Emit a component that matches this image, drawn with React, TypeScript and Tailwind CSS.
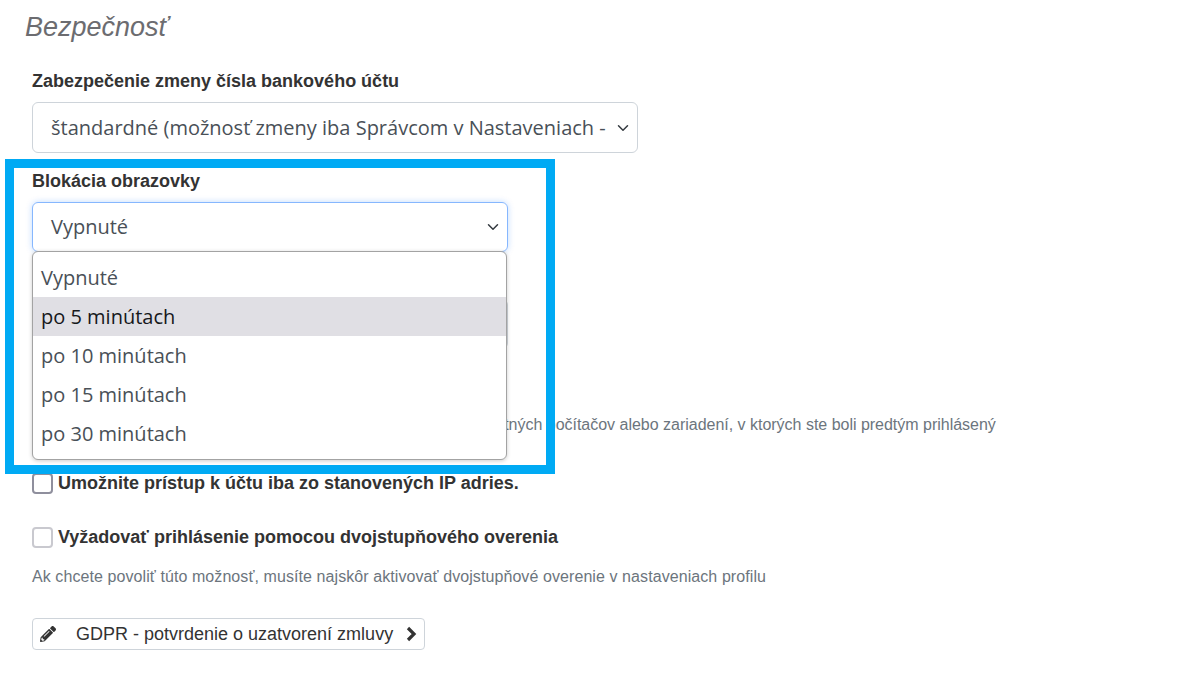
import { FaPencilAlt } from "react-icons/fa";

const OPTIONS = ["Vypnuté", "po 5 minútach", "po 10 minútach", "po 15 minútach", "po 30 minútach"];
const SELECT_FONT = { fontFamily: '"Open Sans", sans-serif' };

function Chevron() {
  return (
    <svg viewBox="0 0 16 16" className="w-4 h-3 shrink-0" fill="none" stroke="#343a40" strokeWidth="2" strokeLinecap="round" strokeLinejoin="round" aria-hidden>
      <path d="m2 5 6 6 6-6" />
    </svg>
  );
}

export default function App() {
  return (
    <div className="relative h-[682px] overflow-hidden bg-white pl-[32px] font-['Liberation_Sans',sans-serif] text-[18px] text-[#333333]">
      <h2 className="-ml-[7px] pt-[11px] text-[27px] leading-[32px] italic text-[#6c6c70]">Bezpečnosť</h2>

      <label className="mt-[26px] block leading-[24px] font-bold">Zabezpečenie zmeny čísla bankového účtu</label>
      <div className="mt-[9px] flex h-[51px] w-[606px] items-center justify-between rounded-[6px] border border-[#ced4da] pl-[18px] pr-[6px] text-[20px] text-[#495057]" style={SELECT_FONT}>
        <span className="whitespace-nowrap">štandardné (možnosť zmeny iba Správcom v Nastaveniach -</span>
        <Chevron />
      </div>

      <label className="mt-[16px] block leading-[24px] font-bold">Blokácia obrazovky</label>
      <div className="relative mt-[9px] w-[476px]">
        <div className="flex h-[50px] items-center justify-between rounded-[6px] border border-[#86b7fe] pl-[18px] pr-[6px] text-[20px] text-[#495057] shadow-[0_0_6px_rgba(13,110,253,0.25)]" style={SELECT_FONT}>
          <span>Vypnuté</span>
          <Chevron />
        </div>
        <ul className="absolute top-[49px] left-0 z-10 h-[209px] w-[475px] overflow-hidden rounded-[6px] border border-[#a3a3a3] bg-white py-[6px] text-[20px] text-[#495057] shadow-[0_1px_4px_rgba(0,0,0,0.2)]" style={SELECT_FONT}>
          {OPTIONS.map((o) => (
            <li key={o} className={`flex h-[39px] items-center px-[8px] ${o === "po 5 minútach" ? "bg-[#e0dfe4] text-[#16181b]" : ""}`}>
              {o}
            </li>
          ))}
        </ul>
      </div>

      <div className="mt-[47px] h-[50px] w-[476px] rounded-[6px] border border-[#ced4da]" />

      <p className="mt-[65px] text-[16px] leading-[22px] tracking-[-0.015px] whitespace-nowrap text-[#6c757d]">
        Kliknutím na toto tlačidlo sa jednoducho odhlásite zo všetkých ostatných počítačov alebo zariadení, v ktorých ste boli predtým prihlásený
      </p>

      <div className="mt-[35px] flex items-center gap-[5px]">
        <span className="h-[21px] w-[21px] rounded-[4px] border-2 border-[#8f8f9d] bg-white" />
        <span className="font-bold leading-[24px]">Umožnite prístup k účtu iba zo stanovených IP adries.</span>
      </div>

      <div className="mt-[30px] flex items-center gap-[5px]">
        <span className="h-[21px] w-[21px] rounded-[4px] border-2 border-[#c9c9cf] bg-white" />
        <span className="font-bold leading-[24px]">Vyžadovať prihlásenie pomocou dvojstupňového overenia</span>
      </div>

      <p className="mt-[17px] text-[16px] leading-[22px] tracking-[0.08px] whitespace-nowrap text-[#6c757d]">
        Ak chcete povoliť túto možnosť, musíte najskôr aktivovať dvojstupňové overenie v nastaveniach profilu
      </p>

      <button className="mt-[30px] flex h-[32px] w-[393px] items-center rounded-[4px] border border-[#ced4da] bg-white pl-[7px] text-[#333333]">
        <FaPencilAlt className="h-[16px] w-[16px] text-[#333333]" />
        <span className="ml-[20px] whitespace-nowrap">GDPR - potvrdenie o uzatvorení zmluvy</span>
        <svg viewBox="0 0 12 16" className="ml-[12px] h-[16px] w-[12px]" fill="none" stroke="#333333" strokeWidth="3.2" aria-hidden>
          <path d="m3 2 6 6-6 6" />
        </svg>
      </button>

      <div className="pointer-events-none absolute top-[159px] left-[5px] z-20 h-[315px] w-[550px] border-[9px] border-[#00aaf4]" />
    </div>
  );
}
